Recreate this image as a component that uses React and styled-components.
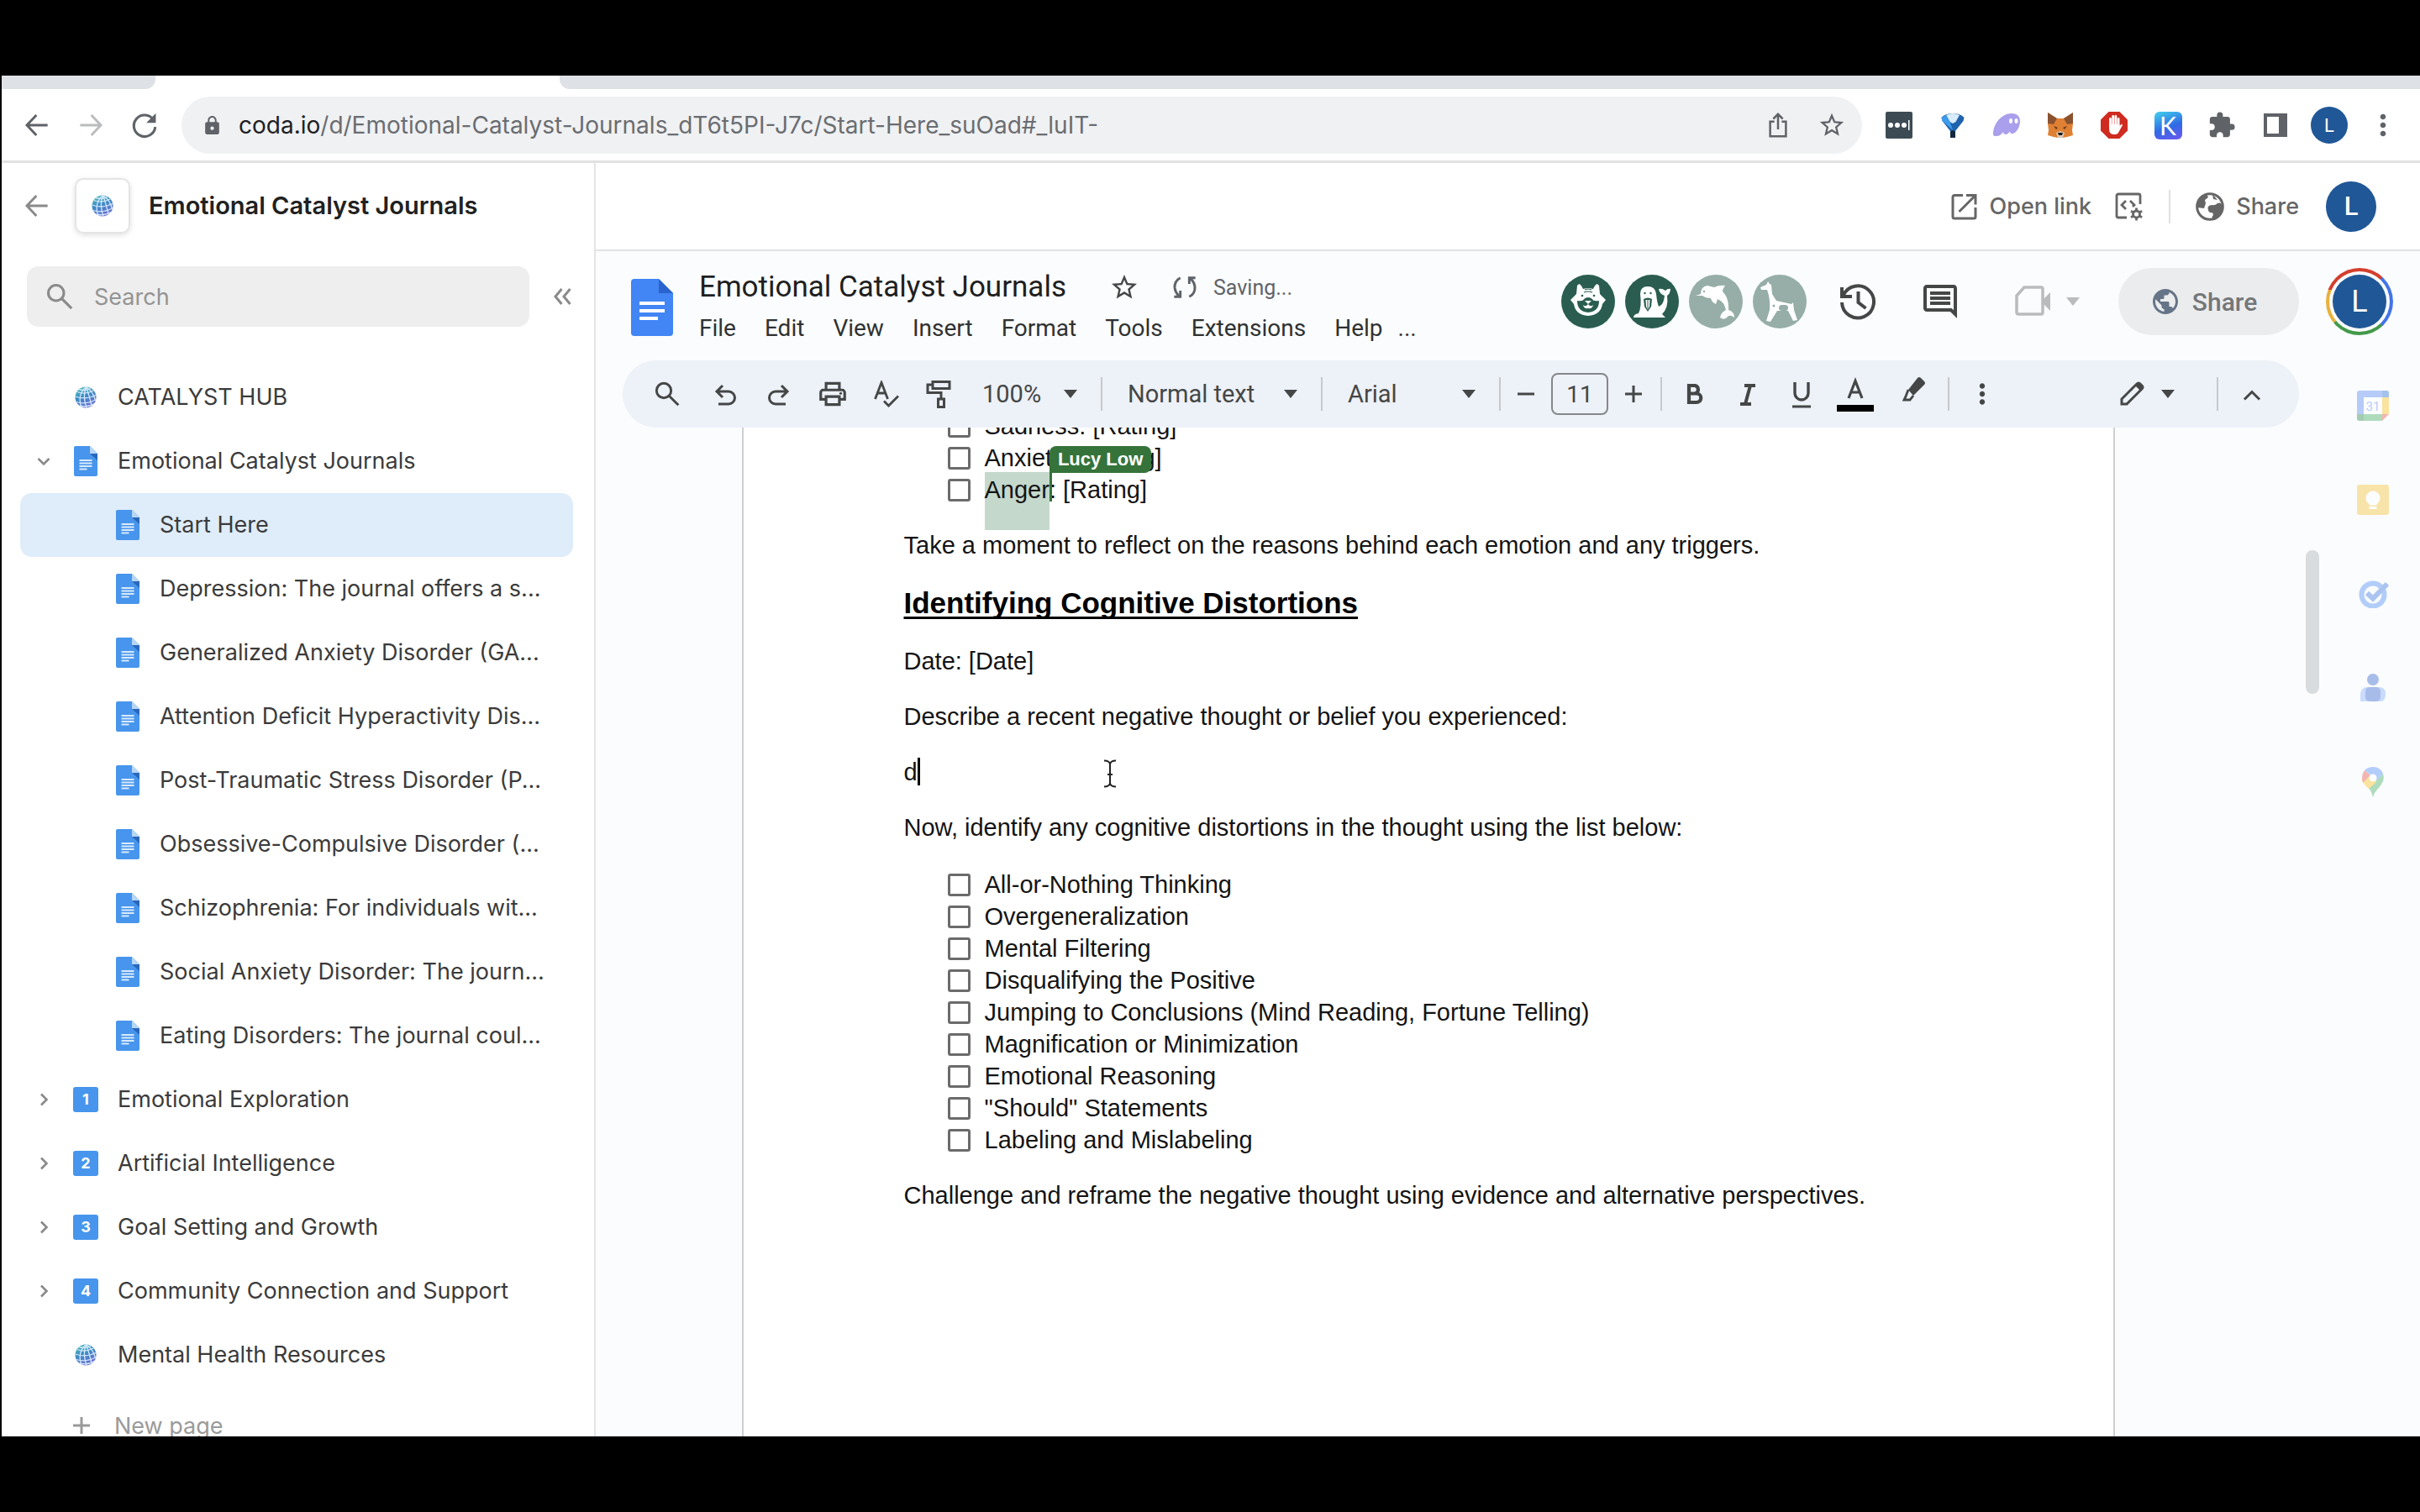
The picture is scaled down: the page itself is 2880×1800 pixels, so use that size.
import React from 'react';
import styled, { createGlobalStyle, css } from 'styled-components';
import { MdExtension, MdLock, MdPublic, MdOutlineComment, MdOutlinePrint, MdMoreVert, MdStarBorder } from 'react-icons/md';

const GlobalStyle = createGlobalStyle`
  * { box-sizing: border-box; }
  body { margin: 0; background: #000; font-family: Inter, "Noto Sans", sans-serif; color: #3b3b3b; }
  h1, h2, p, ul { margin: 0; padding: 0; font-weight: 400; }
  ul { list-style: none; }
  a { color: inherit; text-decoration: none; }
  button { border: 0; padding: 0; background: none; font: inherit; color: inherit; }
  svg { display: block; flex: none; }
`;

/* ---------- shell ---------- */
const Screen = styled.div`
  height: 100vh;
  padding: 90px 0 90px 2px;
  display: flex;
  flex-direction: column;
  background: #000;
`;
const TabStrip = styled.div`
  flex: none;
  height: 16px;
  display: flex;
  justify-content: space-between;
  background: #fff;
`;
const TabEdge = styled.div`
  background: #dee1e5;
  ${p => p.$first
    ? css`width: 183px; border-bottom-right-radius: 12px;`
    : css`flex: 1; margin-left: 481px; border-bottom-left-radius: 12px;`}
`;
const BrowserBar = styled.header`
  flex: none;
  display: flex;
  align-items: center;
  padding: 9px 12px 8px 10px;
  background: #fff;
  border-bottom: 3px solid #e2e2e2;
  color: #5f6368;
`;
const BarButton = styled.button`
  width: 64px;
  height: 48px;
  display: flex;
  align-items: center;
  justify-content: center;
  color: ${p => p.$color || 'inherit'};
`;
const AddressBar = styled.div`
  flex: 1;
  min-width: 0;
  height: 68px;
  margin: 0 12px;
  padding: 0 4px 0 24px;
  border-radius: 34px;
  display: flex;
  align-items: center;
  background: #f0f1f3;
`;
const Url = styled.span`
  flex: 1;
  margin-left: 19px;
  font-size: 28px;
  line-height: 36px;
  white-space: nowrap;
  overflow: hidden;
  color: #6a6d71;
  b { font-weight: 400; color: #202124; }
`;
const Avatar = styled.span`
  width: ${p => p.$size}px;
  height: ${p => p.$size}px;
  border-radius: 50%;
  display: flex;
  align-items: center;
  justify-content: center;
  background: #205796;
  color: #fff;
  font-family: Roboto, sans-serif;
  font-size: ${p => p.$font}px;
`;
const Body = styled.div`
  flex: 1;
  min-height: 0;
  display: flex;
  background: #fff;
`;

/* ---------- sidebar ---------- */
const Sidebar = styled.aside`
  flex: none;
  width: 707px;
  overflow: hidden;
  border-right: 2px solid #e2e4e6;
`;
const SideHead = styled.div`
  display: flex;
  align-items: center;
  padding: 18px 0 0 10px;
`;
const DocTile = styled.span`
  width: 66px;
  height: 66px;
  margin: 0 22px 0 13px;
  border: 2px solid #e4e4e4;
  border-radius: 10px;
  display: flex;
  align-items: center;
  justify-content: center;
  box-shadow: 0 2px 6px rgba(0, 0, 0, 0.12);
`;
const SideTitle = styled.h2`
  font-size: 29px;
  line-height: 36px;
  font-weight: 600;
  color: #212121;
`;
const SearchRow = styled.form`
  display: flex;
  align-items: center;
  padding: 39px 0 46px 30px;
  color: #8a8a8a;
`;
const SearchBox = styled.label`
  flex: 1;
  height: 72px;
  padding-left: 22px;
  border-radius: 14px;
  display: flex;
  align-items: center;
  gap: 24px;
  background: #eee;
`;
const SearchInput = styled.input`
  flex: 1;
  min-width: 0;
  border: 0;
  padding: 0;
  background: none;
  font: 27px Inter, sans-serif;
  &::placeholder { color: #939393; opacity: 1; }
`;
const CollapseButton = styled(BarButton)`width: 77px;`;
const PageRow = styled.li`
  height: 76px;
  margin: 0 25px 0 22px;
  padding-left: ${p => (p.$nested ? 50 : 0)}px;
  border-radius: 14px;
  display: flex;
  align-items: center;
  background: ${p => (p.$active ? '#dfecf9' : 'none')};
`;
const Toggle = styled.button`
  width: 56px;
  height: 56px;
  display: flex;
  align-items: center;
  justify-content: center;
  color: #8a8a8a;
`;
const ToggleSpace = styled.span`width: 56px;`;
const PageLink = styled.a`
  flex: 1;
  min-width: 0;
  display: flex;
  align-items: center;
  gap: 23px;
  padding-left: 7px;
  font-size: 27px;
  line-height: 36px;
  white-space: nowrap;
`;
const IconSlot = styled.span`
  width: 30px;
  display: flex;
  justify-content: center;
`;
const NumberIcon = styled.span`
  width: 30px;
  height: 30px;
  border-radius: 3px;
  background: #4795ec;
  color: #fff;
  font-size: 18px;
  line-height: 30px;
  font-weight: 700;
  text-align: center;
`;
const NewPage = styled.button`
  display: flex;
  align-items: center;
  gap: 28px;
  height: 76px;
  margin: 8px 0 0 84px;
  font-size: 27px;
  color: #9a9a9a;
`;

/* ---------- coda main column ---------- */
const Main = styled.main`
  flex: 1;
  min-width: 0;
  display: flex;
  flex-direction: column;
`;
const LinkBar = styled.div`
  flex: none;
  height: 105px;
  padding-right: 52px;
  border-bottom: 2px solid #e1e3e5;
  display: flex;
  align-items: center;
  justify-content: flex-end;
  font-size: 27px;
  font-weight: 500;
  color: #666;
`;
const LabelButton = styled.button`
  display: flex;
  align-items: center;
  gap: 14px;
`;
const EmbedButton = styled.button`margin: 0 30px 0 28px;`;
const BarRule = styled.span`
  width: 2px;
  height: 40px;
  margin-right: 30px;
  background: #e0e0e0;
`;
const ProfileButton = styled.button`margin-left: 32px;`;

/* ---------- document editor ---------- */
const Editor = styled.section`
  flex: 1;
  min-height: 0;
  display: flex;
  flex-direction: column;
  background: #fafcfe;
  font-family: Roboto, "Noto Sans", sans-serif;
  color: #444746;
`;
const EditorHead = styled.div`
  flex: none;
  display: flex;
  align-items: center;
  padding: 18px 32px 14px 42px;
`;
const TitleBlock = styled.div`
  flex: 1;
  margin-left: 31px;
`;
const TitleRow = styled.div`
  display: flex;
  align-items: center;
  gap: 32px;
  height: 50px;
`;
const DocTitle = styled.h1`
  margin-right: 17px;
  font-size: 35px;
  line-height: 48px;
  color: #1f1f1f;
`;
const Status = styled.span`
  display: flex;
  align-items: center;
  gap: 14px;
  font-size: 25px;
  color: #5f6368;
`;
const SmallButton = styled.button`
  width: 40px;
  display: flex;
  justify-content: center;
`;
const MenuBar = styled.nav`
  display: flex;
  gap: 34px;
  font-size: 28px;
  line-height: 48px;
  color: #303232;
`;
const MenuMore = styled.button`margin-left: -16px;`;
const HeadTools = styled.div`
  display: flex;
  align-items: center;
  padding-bottom: 14px;
`;
const Collaborators = styled.div`
  display: flex;
  gap: 12px;
  margin-right: 12px;
`;
const HeadButton = styled.button`
  width: 98px;
  height: 64px;
  display: flex;
  align-items: center;
  justify-content: center;
`;
const MeetButton = styled.button`
  display: flex;
  align-items: center;
  gap: 19px;
  padding: 0 46px 0 40px;
  color: #b9bbbc;
`;
const SharePill = styled.button`
  width: 215px;
  height: 80px;
  padding-right: 12px;
  border-radius: 40px;
  display: flex;
  align-items: center;
  justify-content: center;
  gap: 14px;
  background: #ebecee;
  font-size: 30px;
  font-weight: 500;
  color: #747678;
`;
const AccountRing = styled.button`
  width: 80px;
  height: 80px;
  margin-left: 32px;
  padding: 4px;
  border-radius: 50%;
  background: conic-gradient(#d33f2c 0 12%, #4374e8 12% 38%, #439a4b 38% 64%, #e9b13c 64% 81%, #d33f2c 81%);
`;
const RingGap = styled.span`
  display: block;
  padding: 4px;
  border-radius: 50%;
  background: #fafcfe;
`;
const EditorBody = styled.div`
  flex: 1;
  min-height: 0;
  display: flex;
`;
const EditorColumn = styled.div`
  flex: 1;
  min-width: 0;
  display: flex;
  flex-direction: column;
`;
const Toolbar = styled.div`
  flex: none;
  height: 80px;
  margin-left: 32px;
  padding: 0 28px 0 16px;
  border-radius: 40px;
  display: flex;
  align-items: center;
  background: #edf1f8;
  font-size: 29px;
`;
const ToolButton = styled.button`
  width: ${p => p.$width || 64}px;
  height: 56px;
  display: flex;
  align-items: center;
  justify-content: center;
`;
const ToolGroup = styled.div`
  display: flex;
  margin-left: -6px;
`;
const ToolRule = styled.span`
  width: 2px;
  height: 40px;
  margin: 0 12px 0 14px;
  background: #c7c9cc;
`;
const SelectWrap = styled.span`
  width: ${p => p.$width}px;
  display: grid;
  align-items: center;
  > * { grid-area: 1 / 1; }
  > svg { justify-self: end; margin-right: 14px; pointer-events: none; }
`;
const Select = styled.select`
  appearance: none;
  height: 56px;
  padding: 0 0 0 18px;
  border: 0;
  background: none;
  font: inherit;
  color: inherit;
`;
const SizeInput = styled.input`
  width: 68px;
  height: 50px;
  margin: 0 12px;
  padding: 0;
  border: 2px solid #85888a;
  border-radius: 8px;
  background: none;
  font: inherit;
  font-size: 28px;
  color: inherit;
  text-align: center;
`;
const ToolSpacer = styled.span`flex: 1;`;
const ModeButton = styled.button`
  display: flex;
  align-items: center;
  gap: 19px;
  padding-right: 36px;
`;
const Canvas = styled.div`
  flex: 1;
  min-height: 0;
  overflow: hidden;
  display: flex;
  justify-content: center;
  padding-right: 46px;
`;
const Paper = styled.article`
  flex: 0 1 1634px;
  margin-top: -21px;
  padding: 0 191px;
  border: 2px solid #cdcfd0;
  border-width: 0 2px;
  min-height: 2112px;
  background: #fff;
  font: 29px/38px "Liberation Sans", Arial, sans-serif;
  color: #141414;
`;
const Paragraph = styled.p`
  margin-top: 28px;
  position: relative;
`;
const Heading = styled.h2`
  margin-top: 28px;
  font-size: 35px;
  line-height: 44px;
  font-weight: 700;
  text-decoration: underline;
  text-decoration-thickness: 3px;
  text-underline-offset: 4px;
  text-decoration-skip-ink: none;
  color: #000;
`;
const Checklist = styled.ul`
  padding-left: 52px;
  margin-top: ${p => p.$top || 0}px;
`;
const CheckItem = styled.label`
  display: flex;
  align-items: center;
  gap: 17px;
`;
const CheckBox = styled.input`
  appearance: none;
  width: 27px;
  height: 27px;
  margin: 0;
  border: 3px solid #6b6b6b;
  border-radius: 3px;
`;
const Selected = styled.span`
  position: relative;
  isolation: isolate;
  &::before {
    content: '';
    position: absolute;
    z-index: -1;
    inset: -5px 0 -32px;
    background: #c5d8cc;
  }
`;
const PeerCaret = styled.span`
  position: absolute;
  left: 100%;
  top: -4px;
  width: 3px;
  height: 34px;
  background: #35733a;
`;
const PeerTag = styled.span`
  position: absolute;
  left: 100%;
  bottom: 100%;
  margin-bottom: 4px;
  padding: 0 10px;
  border-radius: 8px 8px 8px 0;
  background: #35733a;
  color: #fff;
  font-size: 22px;
  line-height: 32px;
  font-weight: 700;
  white-space: nowrap;
`;
const TextCaret = styled.span`
  display: inline-block;
  width: 3px;
  height: 33px;
  vertical-align: -6px;
  background: #000;
`;
const Pointer = styled.span`
  position: absolute;
  left: 236px;
  top: 4px;
`;
const ScrollThumb = styled.div`
  flex: none;
  width: 16px;
  height: 171px;
  margin: 226px 0 0 8px;
  border-radius: 8px;
  background: #d8dcdf;
`;
const Rail = styled.nav`
  flex: none;
  width: 120px;
  padding: 30px 0 0 8px;
  display: flex;
  flex-direction: column;
  align-items: center;
  gap: 64px;
`;
const RailButton = styled.button`
  height: 48px;
  display: flex;
  align-items: center;
  opacity: 0.38;
`;

/* ---------- drawings ---------- */
const Line = ({ size = 32, box = 24, w = 2, children, ...rest }) => (
  <svg width={size} height={size} viewBox={`0 0 ${box} ${box}`} fill="none" stroke="currentColor" strokeWidth={w} aria-hidden="true" {...rest}>
    {children}
  </svg>
);
const ArrowLeft = ({ w = 2.2 }) => <Line size={32} w={w}><path d="M21.5 12H3.5M11.5 3L3 12l8.500 9" /></Line>;
const ArrowRight = () => <Line size={32} w={2.2}><path d="M2.500 12h18M12.500 3L21 12l-8.500 9" /></Line>;
const Reload = () => (
  <Line size={34} w={2.2}><path d="M19.500 7.500A9 9 0 1 0 21 13.500" /><path d="M21.500 2v8h-8z" fill="currentColor" stroke="none" /></Line>
);
const Caret = () => <svg width="16" height="10" viewBox="0 0 16 10" aria-hidden="true"><path d="M0 0h16L8 10z" fill="currentColor" /></svg>;
const Magnifier = ({ size = 34, w = 2.200 }) => <Line size={size} w={w}><circle cx="9" cy="9" r="6.500" /><path d="M13.500 13.500L22 22" /></Line>;
const Chevrons = () => <Line size={24} w={3}><path d="M11.500 3L4 12l7.500 9M21.500 3L14 12l7.500 9" /></Line>;
const Chevron = ({ open }) => (
  <Line size={16} box={16} w={2.600}><path d={open ? 'M1.500 5L8 11.500 14.500 5' : 'M5 1.500L11.500 8 5 14.500'} /></Line>
);
const Globe = () => (
  <svg width="26" height="26" viewBox="0 0 26 26" aria-hidden="true">
    <defs>
      <linearGradient id="globe" x1="0" y1="0" x2="0.500" y2="1">
        <stop offset="0" stopColor="#5cc8b8" /><stop offset="0.500" stopColor="#3b8cc4" /><stop offset="1" stopColor="#6a6fd0" />
      </linearGradient>
    </defs>
    <circle cx="13" cy="13" r="12.500" fill="url(#globe)" />
    <g fill="none" stroke="#d5e8fb" strokeWidth="1.300">
      <path d="M3 6.500Q12 10.500 22 5M.800 12Q12 16.500 25 10.500M2 18.500Q13 22 24.500 16M5 3.500Q14 6 19 2.500M6 23Q15 25.500 23 20.500" />
      <path d="M13.500.500Q3 9 7.500 24.500M13.500.500Q9 12 14 25.500M13.500.500Q17 10 20 23M13.500.500Q22 6 24.500 17" />
    </g>
  </svg>
);
const PageIcon = () => (
  <svg width="28" height="36" viewBox="0 0 28 36" aria-hidden="true">
    <path d="M2 0h17l9 9v25a2 2 0 0 1-2 2H2a2 2 0 0 1-2-2V2a2 2 0 0 1 2-2z" fill="#4795ec" />
    <path d="M19 0l9 9h-9z" fill="#b5d6f8" /><path d="M19 9h9v8z" fill="#2a67bb" />
    <path d="M6.500 17h15M6.500 20.500h15M6.500 24h15M6.500 27.500h9" stroke="#d8eafc" strokeWidth="2" />
  </svg>
);
const DocsLogo = () => (
  <svg width="50" height="68" viewBox="0 0 50 68" aria-hidden="true">
    <path d="M4 0h29l17 17v47a4 4 0 0 1-4 4H4a4 4 0 0 1-4-4V4a4 4 0 0 1 4-4z" fill="#4285f4" />
    <path d="M33 0l17 17H33z" fill="#2a63cd" />
    <path d="M10 29h30M10 38h30M10 47h22" stroke="#fff" strokeWidth="4" />
  </svg>
);
const UploadIcon = () => (
  <Line size={30}><path d="M8.500 8.500H4.500v14h15v-14h-4M12 16V2M7.500 6L12 1.500 16.500 6" /></Line>
);
const PanelIcon = () => (
  <svg width="28" height="28" viewBox="0 0 28 28" aria-hidden="true"><path fillRule="evenodd" d="M0 0h28v28H0zM4 4v20h14V4z" fill="currentColor" /></svg>
);
const DotsTile = () => (
  <svg width="32" height="32" viewBox="0 0 32 32" aria-hidden="true">
    <rect width="32" height="32" rx="2" fill="#3d4b54" />
    <g fill="#fff"><circle cx="6" cy="16" r="3" /><circle cx="14" cy="16" r="3" /><circle cx="22" cy="16" r="3" /><path d="M27 10h1.500v12H27z" /></g>
  </svg>
);
const FunnelIcon = () => (
  <svg width="30" height="32" viewBox="0 0 30 32" aria-hidden="true">
    <path d="M1.500 7Q6 2 15 2t13.500 5l-1 4-9.500 12v8h-6v-8L2.500 11z" fill="#1f62ae" />
    <path d="M7 4Q15 0 23 4l-4.500 8-3.500 2-3.500-2z" fill="#d8ecfb" /><path d="M1.500 7L7 4l5 9 3 9L2.500 11z" fill="#3d9bea" /><path d="M12 23.500l3-1.500 3 1.500V31h-6z" fill="#12283f" />
  </svg>
);
const GhostIcon = () => (
  <svg width="34" height="30" viewBox="0 0 34 30" aria-hidden="true">
    <path d="M1 26C1 12 12 1 23 1c7 0 10 4 10 9 0 8-5 15-9 15-3 0-3-2-3-3-1 2-3 4-5 4s-3-1-3-3c-2 3-5 5-8 5-2 0-4 0-4-2z" fill="#a99fec" />
    <ellipse cx="22" cy="10" rx="2" ry="3" fill="#fff" /><ellipse cx="28.500" cy="10" rx="2" ry="3" fill="#fff" />
  </svg>
);
const FoxIcon = () => (
  <svg width="32" height="32" viewBox="0 0 32 32" aria-hidden="true">
    <path d="M1 1l11 7h8l11-7v13l-1 8 1 6-7 2-5 1h-6l-5-1-7-2 1-6-1-8z" fill="#e08032" />
    <path d="M1 1l11 7-4 7-7-1zM31 1l-11 7 4 7 7-1z" fill="#8a5230" />
    <path d="M8 17l5 2-2 2zM24 17l-5 2 2 2z" fill="#5b3a24" /><path d="M11 25l5-2 5 2-2 6h-6z" fill="#d8c7b5" /><path d="M13 25h6l-1 3h-4z" fill="#1d1a18" />
  </svg>
);
const StopIcon = () => (
  <svg width="32" height="32" viewBox="0 0 32 32" aria-hidden="true">
    <path d="M9.500 0h13L32 9.500v13L22.500 32h-13L0 22.500v-13z" fill="#cf2b20" />
    <g stroke="#fff" strokeWidth="2.800" strokeLinecap="round"><path d="M11.500 18V8.500M14.700 16V5.500M17.900 16V5.500M21.100 17V8.500" /></g>
    <path d="M10.100 15h12.400v2l2.500-2.500 1 1.500-5 9q-1 2-5 2-5.900 0-5.900-6z" fill="#fff" />
  </svg>
);
const KTile = styled.span`
  width: 33px;
  height: 33px;
  border-radius: 6px;
  background: linear-gradient(160deg, #3fc0ea 10%, #2f6be6 55%, #6f58ee);
  color: #fff;
  font: 30px/33px Lato, sans-serif;
  text-align: center;
`;
const OpenLinkIcon = () => (
  <Line size={32} box={32} w={3}><path d="M14 2.500H4a2 2 0 0 0-2 2V28a2 2 0 0 0 2 2h23a2 2 0 0 0 2-2V17M18 2.500h11v11M29 2.500L9.500 22" /></Line>
);
const EmbedIcon = () => (
  <Line size={34} box={34} w={2.800}>
    <path d="M30 14V4a2 2 0 0 0-2-2H4a2 2 0 0 0-2 2v24a2 2 0 0 0 2 2h10M13 10l-5 5 5 5M18 10l5 5-2 2" />
    <circle cx="25.500" cy="26" r="4" /><path d="M25.500 18.500v3M25.500 30.500v3M19 22.200l2.600 1.500M29.500 28.300l2.600 1.500M19 29.800l2.600-1.500M29.500 23.700l2.600-1.500" />
  </Line>
);
const EarthIcon = () => (
  <svg width="34" height="34" viewBox="0 0 34 34" aria-hidden="true">
    <circle cx="17" cy="17" r="15.300" fill="none" stroke="currentColor" strokeWidth="3" />
    <path d="M13 2C5 4 1 10 2 18l8 1 2-6-1-4 4-3zM15 21q-2-5 4-6 4 1 7-2 4-2 6 3 0 9-6 13l-5 3q-3-2 0-5l-1-3q-4 1-5-3zM20 2l1 6 5 1z" fill="currentColor" />
  </svg>
);
const SyncIcon = () => (
  <Line size={32} w={2.200}><path d="M8 3.500q-5.500 3-5 9 .500 4 3.500 7M2.500 20.500H8V15M16 20.500q5.500-3 5-9-.500-4-3.500-7M21.500 3.500H16V9" /></Line>
);
const HistoryIcon = () => (
  <Line size={44} box={44} w={4}>
    <path d="M4.500 15A19 19 0 1 1 3 23" /><path d="M3 5v11h12" strokeWidth="4" /><path d="M22.500 10v13l9 7" />
  </Line>
);
const VideoIcon = () => (
  <Line size={42} box={42} w={3.500}>
    <path d="M11 4h20a2 2 0 0 1 2 2v28a2 2 0 0 1-2 2H4a2 2 0 0 1-2-2V14z" /><path d="M33 19l9-9v22l-9-9z" fill="currentColor" stroke="none" />
  </Line>
);
const UndoIcon = ({ flip }) => (
  <Line size={28} box={28} w={3} transform={flip ? 'scale(-1 1)' : undefined}>
    <path d="M11 4L4 11l7 7M4 11h14a6.500 6.500 0 0 1 0 15H6" />
  </Line>
);
const SpellIcon = () => (
  <Line size={32} box={32} w={2.800}><path d="M2.500 22L10 2.500 17.500 22M5.500 15h9M13 24.500l5.500 5.500L30 18.500" /></Line>
);
const RollerIcon = () => (
  <Line size={34} box={34} w={3}><path d="M8 2.500h20v8H8zM8 6H2v9.500h16V23M14.500 23h7v9.500h-7z" /></Line>
);
const BarGlyph = ({ plus }) => <Line size={22} box={22} w={3}><path d={plus ? 'M1 11h20M11 1v20' : 'M1 11h20'} /></Line>;
const BoldIcon = () => <Line size={28} box={28} w={4.200}><path d="M8 4h7.500a5 5 0 0 1 0 9.500H8zM8 13.500h9a5.200 5.200 0 0 1 0 10.500H8z" /></Line>;
const ItalicIcon = () => <Line size={28} box={28} w={4}><path d="M10 4h13M5 26h13M17 4l-6 22" /></Line>;
const UnderlineIcon = () => <Line size={34} box={34} w={3.400}><path d="M9 3v13a8 8 0 0 0 16 0V3" /><path d="M6 32h22" strokeWidth="3" /></Line>;
const ColorIcon = () => (
  <svg width="44" height="42" viewBox="0 0 44 42" fill="none" aria-hidden="true">
    <path d="M14 26L22 5.500 30 26M16.500 19h11" stroke="currentColor" strokeWidth="3.200" /><path d="M0 34h44v8H0z" fill="#000" />
  </svg>
);
const HighlightIcon = () => (
  <svg width="32" height="32" viewBox="0 0 32 32" aria-hidden="true" transform="translate(7 -6)">
    <path d="M8 17l11-14q2-2 4 0l4 4q2 2 0 4L14 24z" fill="currentColor" />
    <path d="M8 17l-3 8-2 4h7l4-5" fill="none" stroke="currentColor" strokeWidth="2.800" />
  </svg>
);
const PencilIcon = () => (
  <Line size={32} box={32} w={3}><path d="M4 28v-6L22 4q2-2 4 0l2 2q2 2 0 4L10 28z" /><path d="M20 6l6 6 3-4-5-5z" fill="currentColor" stroke="none" /></Line>
);
const UpIcon = () => <Line size={22} box={22} w={3}><path d="M2 17.500l9-9 9 9" /></Line>;
const IBeam = () => (
  <svg width="18" height="34" viewBox="0 0 18 34" fill="none" stroke="#222" strokeWidth="2" aria-hidden="true">
    <path d="M2 1.500q6 0 7 4 1-4 7-4M2 32.500q6 0 7-4 1 4 7 4M9 5v24M6 18h6" />
  </svg>
);

const Animal = ({ color, label, children }) => (
  <svg width="64" height="64" viewBox="0 0 64 64" role="img" aria-label={label}>
    <circle cx="32" cy="32" r="32" fill={color} />{children}
  </svg>
);
const DEEP = '#2a5d50';
const SOFT = '#96aea7';
const animals = [
  <Animal key="a" color={DEEP} label="Anonymous quokka">
    <path d="M19 13q3-5 7 4 6-2 12 0 4-9 7-4l1 10 7 7-4 5q-2 13-17 14-15-1-17-14l-4-5 7-7z" fill="#fff" />
    <path d="M19 31q7 1 8-2 5-4 10 0 1 3 8 2 0 13-13 14-13-1-13-14z" fill={DEEP} />
    <path d="M28 31h8l-4 4zM26 36q3 3 6-1 3 4 6 1-1 5-6 4-5 1-6-4z" fill="#fff" />
    <g stroke={DEEP} strokeWidth="1.200" fill="none"><path d="M28 18q4-2 8 0M27 21q5-2 10 0" /></g>
    <circle cx="25" cy="25" r="1.300" fill={DEEP} /><circle cx="39" cy="25" r="1.300" fill={DEEP} />
  </Animal>,
  <Animal key="b" color={DEEP} label="Anonymous walrus">
    <path d="M18 23q0-9 9-9t10 9q1 10 3 15 6-2 7-13-6-2-7-8 4-1 8 2 3-3 6-2 0 5-4 8 2 14-6 22l4 4H10q0-4 6-5 4-8 2-23z" fill="#fff" />
    <path d="M22 29q5-3 10 0l-1 9-4 6-4-6z" fill={DEEP} /><path d="M24.500 30h5l-.500 8-2 4-2-4z" fill="#fff" /><path d="M27 30v11" stroke={DEEP} />
    <circle cx="23.500" cy="22" r="1.200" fill={DEEP} /><circle cx="30.500" cy="22" r="1.200" fill={DEEP} />
  </Animal>,
  <Animal key="c" color={SOFT} label="Anonymous dolphin">
    <path d="M8 25l6-2q0-9 8-10l8 2q6-3 13-2-3 4-3 7 8 8 7 22 7 2 7 9-5-4-8-1-4 5-9 1 1-6 7-9-2-10-10-13l-2 6q-5-2-6-7-6 0-10-3z" fill="#fff" />
    <circle cx="18" cy="20" r="1.200" fill={SOFT} />
  </Animal>,
  <Animal key="d" color={SOFT} label="Anonymous giraffe">
    <path d="M9 15l7-3 2-4 2 3 2 1 1 11 5 8 18 4 2-2 1 9 4 12-5 1-6-12H29l-8 13-5-1 4-13q1-13-3-24l-7 0z" fill="#fff" />
    <rect x="31" y="36" width="11" height="7" rx="3.500" fill={SOFT} /><circle cx="25" cy="37" r="1.500" fill={SOFT} />
  </Animal>,
];

const CalendarIcon = () => (
  <svg width="38" height="38" viewBox="0 0 38 38" role="img" aria-label="Calendar">
    <rect x="0" y="1" width="38" height="36" rx="3" fill="#fff" />
    <path d="M3 1h32a3 3 0 0 1 3 3v5H8v20H0V4a3 3 0 0 1 3-3z" fill="#4a7df0" /><path d="M30 9h8v20h-8z" fill="#fbbc04" />
    <path d="M8 29h22v8H8z" fill="#34a853" /><path d="M0 29h8v8H3a3 3 0 0 1-3-3z" fill="#188038" /><path d="M30 29h8l-8 8z" fill="#ea4335" /><path d="M30 1h5a3 3 0 0 1 3 3v5h-8z" fill="#1967d2" />
    <text x="19" y="24.500" textAnchor="middle" fontFamily="Roboto, sans-serif" fontSize="15" fill="#4a7df0">31</text>
  </svg>
);
const KeepIcon = () => (
  <svg width="38" height="38" viewBox="0 0 38 38" aria-hidden="true">
    <rect y="1" width="38" height="36" rx="3" fill="#f6bc20" /><circle cx="19" cy="17" r="8.500" fill="#fff" /><path d="M14.500 24h9M14.500 28.500h9" stroke="#fff" strokeWidth="3" />
  </svg>
);
const TasksIcon = () => (
  <svg width="38" height="34" viewBox="0 0 38 34" fill="none" aria-hidden="true">
    <circle cx="19" cy="18" r="13.500" stroke="#3f82f4" strokeWidth="6" /><path d="M12 16l7 6.500L36 5" stroke="#2d6bdb" strokeWidth="6" />
  </svg>
);
const ContactsIcon = () => (
  <svg width="30" height="34" viewBox="0 0 30 34" aria-hidden="true">
    <circle cx="15" cy="7" r="7" fill="#2257c8" /><path d="M0 33V26q0-10 8-10h14q8 0 8 8 0 9-6 9z" fill="#7fa6fb" /><rect x="6" y="16" width="18" height="17" rx="5" fill="#2257c8" />
  </svg>
);
const MapsIcon = () => (
  <svg width="26" height="36" viewBox="0 0 26 36" aria-hidden="true">
    <path d="M13 36q-1-6-5-11l17-17q2 6-1 11-2 4-6 8-4 4-5 9z" fill="#34a853" />
    <path d="M1 18q-1-2-1-5l9-3 8 8-9 8q-5-4-7-8z" fill="#fbbc04" /><path d="M0 13q0-5 3-9l7 6-9 9q-1-3-1-6z" fill="#ea4335" />
    <path d="M3 4q4-4 10-4 9 0 12 8l-7 8L8 8z" fill="#4285f4" /><circle cx="13" cy="13" r="4.500" fill="#fff" />
  </svg>
);

/* ---------- data ---------- */
const pages = [
  { icon: 'globe', text: 'CATALYST HUB' },
  { icon: 'page', text: 'Emotional Catalyst Journals', toggle: 'open' },
  { icon: 'page', text: 'Start Here', nested: true, active: true },
  { icon: 'page', text: 'Depression: The journal offers a s...', nested: true },
  { icon: 'page', text: 'Generalized Anxiety Disorder (GA...', nested: true },
  { icon: 'page', text: 'Attention Deficit Hyperactivity Dis...', nested: true },
  { icon: 'page', text: 'Post-Traumatic Stress Disorder (P...', nested: true },
  { icon: 'page', text: 'Obsessive-Compulsive Disorder (...', nested: true },
  { icon: 'page', text: 'Schizophrenia: For individuals wit...', nested: true },
  { icon: 'page', text: 'Social Anxiety Disorder: The journ...', nested: true },
  { icon: 'page', text: 'Eating Disorders: The journal coul...', nested: true },
  { icon: 1, text: 'Emotional Exploration', toggle: 'closed' },
  { icon: 2, text: 'Artificial Intelligence', toggle: 'closed' },
  { icon: 3, text: 'Goal Setting and Growth', toggle: 'closed' },
  { icon: 4, text: 'Community Connection and Support', toggle: 'closed' },
  { icon: 'globe', text: 'Mental Health Resources' },
];
const extensions = [
  ['Passwords', <DotsTile />], ['Filter', <FunnelIcon />], ['Phantom', <GhostIcon />], ['Fox wallet', <FoxIcon />],
  ['Ad blocker', <StopIcon />], ['K wallet', <KTile>K</KTile>], ['Extensions', <MdExtension size={34} />], ['Side panel', <PanelIcon />],
  ['Profile', <Avatar $size={44} $font={22}>L</Avatar>], ['Browser menu', <MdMoreVert size={40} />],
];
const menus = ['File', 'Edit', 'View', 'Insert', 'Format', 'Tools', 'Extensions', 'Help'];
const distortions = [
  'All-or-Nothing Thinking', 'Overgeneralization', 'Mental Filtering', 'Disqualifying the Positive',
  'Jumping to Conclusions (Mind Reading, Fortune Telling)', 'Magnification or Minimization',
  'Emotional Reasoning', '"Should" Statements', 'Labeling and Mislabeling',
];
const apps = [['Calendar', <CalendarIcon />], ['Keep', <KeepIcon />], ['Tasks', <TasksIcon />], ['Contacts', <ContactsIcon />], ['Maps', <MapsIcon />]];

const RowIcon = ({ kind }) => (
  kind === 'globe' ? <Globe /> : kind === 'page' ? <PageIcon /> : <NumberIcon>{kind}</NumberIcon>
);
const Dropdown = ({ label, value, width }) => (
  <SelectWrap $width={width}>
    <Select aria-label={label} defaultValue={value}><option>{value}</option></Select>
    <Caret />
  </SelectWrap>
);
const Check = ({ children }) => <li><CheckItem><CheckBox type="checkbox" /><span>{children}</span></CheckItem></li>;

function Browser() {
  return (
    <>
      <TabStrip><TabEdge $first /><TabEdge /></TabStrip>
      <BrowserBar>
        <BarButton aria-label="Back"><ArrowLeft /></BarButton>
        <BarButton aria-label="Forward" $color="#babcbe"><ArrowRight /></BarButton>
        <BarButton aria-label="Reload"><Reload /></BarButton>
        <AddressBar>
          <MdLock size={25} />
          <Url><b>coda.io</b>/d/Emotional-Catalyst-Journals_dT6t5PI-J7c/Start-Here_suOad#_luIT-</Url>
          <BarButton aria-label="Share this page"><UploadIcon /></BarButton>
          <BarButton aria-label="Bookmark"><MdStarBorder size={34} /></BarButton>
        </AddressBar>
        {extensions.map(([name, icon]) => <BarButton key={name} aria-label={name}>{icon}</BarButton>)}
      </BrowserBar>
    </>
  );
}

function PageList() {
  return (
    <Sidebar>
      <SideHead>
        <BarButton aria-label="All docs" $color="#8a8a8a"><ArrowLeft /></BarButton>
        <DocTile><Globe /></DocTile>
        <SideTitle>Emotional Catalyst Journals</SideTitle>
      </SideHead>
      <SearchRow>
        <SearchBox><Magnifier /><SearchInput aria-label="Search" placeholder="Search" /></SearchBox>
        <CollapseButton type="button" aria-label="Collapse sidebar"><Chevrons /></CollapseButton>
      </SearchRow>
      <nav>
        <ul>
          {pages.map(p => (
            <PageRow key={p.text} $nested={p.nested} $active={p.active}>
              {p.toggle ? <Toggle aria-label={'Toggle ' + p.text}><Chevron open={p.toggle === 'open'} /></Toggle> : <ToggleSpace />}
              <PageLink href="#"><IconSlot><RowIcon kind={p.icon} /></IconSlot>{p.text}</PageLink>
            </PageRow>
          ))}
        </ul>
      </nav>
      <NewPage><BarGlyph plus />New page</NewPage>
    </Sidebar>
  );
}

function EditorToolbar() {
  return (
    <Toolbar>
      <ToolButton $width={74} aria-label="Search menus"><Magnifier size={32} /></ToolButton>
      <ToolButton aria-label="Undo"><UndoIcon /></ToolButton>
      <ToolButton aria-label="Redo"><UndoIcon flip /></ToolButton>
      <ToolButton aria-label="Print"><MdOutlinePrint size={38} /></ToolButton>
      <ToolButton aria-label="Spelling"><SpellIcon /></ToolButton>
      <ToolButton aria-label="Paint format"><RollerIcon /></ToolButton>
      <Dropdown label="Zoom" value="100%" width={145} />
      <ToolRule />
      <Dropdown label="Style" value="Normal text" width={234} />
      <ToolRule />
      <Dropdown label="Font" value="Arial" width={184} />
      <ToolRule />
      <ToolButton $width={36} aria-label="Decrease font size"><BarGlyph /></ToolButton>
      <SizeInput aria-label="Font size" defaultValue="11" />
      <ToolButton $width={36} aria-label="Increase font size"><BarGlyph plus /></ToolButton>
      <ToolRule />
      <ToolGroup>
        <ToolButton aria-label="Bold"><BoldIcon /></ToolButton>
        <ToolButton aria-label="Italic"><ItalicIcon /></ToolButton>
        <ToolButton aria-label="Underline"><UnderlineIcon /></ToolButton>
        <ToolButton aria-label="Text color"><ColorIcon /></ToolButton>
        <ToolButton aria-label="Highlight"><HighlightIcon /></ToolButton>
      </ToolGroup>
      <ToolRule />
      <ToolButton $width={54} aria-label="More"><MdMoreVert size={38} /></ToolButton>
      <ToolSpacer />
      <ModeButton aria-label="Editing mode"><PencilIcon /><Caret /></ModeButton>
      <ToolRule />
      <ToolButton $width={56} aria-label="Hide menus"><UpIcon /></ToolButton>
    </Toolbar>
  );
}

function Document() {
  return (
    <Canvas>
      <Paper>
        <Checklist>
          <Check>Sadness: [Rating]</Check>
          <Check>Anxiety: [Rating]</Check>
          <Check><Selected>Anger<PeerCaret /><PeerTag>Lucy Low</PeerTag></Selected>: [Rating]</Check>
        </Checklist>
        <Paragraph>Take a moment to reflect on the reasons behind each emotion and any triggers.</Paragraph>
        <Heading>Identifying Cognitive Distortions</Heading>
        <Paragraph>Date: [Date]</Paragraph>
        <Paragraph>Describe a recent negative thought or belief you experienced:</Paragraph>
        <Paragraph>d<TextCaret /><Pointer><IBeam /></Pointer></Paragraph>
        <Paragraph>Now, identify any cognitive distortions in the thought using the list below:</Paragraph>
        <Checklist $top={30}>{distortions.map(d => <Check key={d}>{d}</Check>)}</Checklist>
        <Paragraph>Challenge and reframe the negative thought using evidence and alternative perspectives.</Paragraph>
      </Paper>
    </Canvas>
  );
}

export default function App() {
  return (
    <Screen>
      <GlobalStyle />
      <Browser />
      <Body>
        <PageList />
        <Main>
          <LinkBar>
            <LabelButton><OpenLinkIcon />Open link</LabelButton>
            <EmbedButton aria-label="Embed settings"><EmbedIcon /></EmbedButton>
            <BarRule />
            <LabelButton><EarthIcon />Share</LabelButton>
            <ProfileButton aria-label="Profile"><Avatar $size={60} $font={31}>L</Avatar></ProfileButton>
          </LinkBar>
          <Editor>
            <EditorHead>
              <DocsLogo />
              <TitleBlock>
                <TitleRow>
                  <DocTitle>Emotional Catalyst Journals</DocTitle>
                  <SmallButton aria-label="Star"><MdStarBorder size={36} /></SmallButton>
                  <Status><SmallButton as="span"><SyncIcon /></SmallButton>Saving...</Status>
                </TitleRow>
                <MenuBar>
                  {menus.map(m => <button key={m}>{m}</button>)}
                  <MenuMore aria-label="More menus">...</MenuMore>
                </MenuBar>
              </TitleBlock>
              <HeadTools>
                <Collaborators>{animals}</Collaborators>
                <HeadButton aria-label="Version history"><HistoryIcon /></HeadButton>
                <HeadButton aria-label="Comments"><MdOutlineComment size={48} /></HeadButton>
                <MeetButton aria-label="Meet"><VideoIcon /><Caret /></MeetButton>
                <SharePill><MdPublic size={36} color="#667487" />Share</SharePill>
                <AccountRing aria-label="Account"><RingGap><Avatar $size={64} $font={36}>L</Avatar></RingGap></AccountRing>
              </HeadTools>
            </EditorHead>
            <EditorBody>
              <EditorColumn>
                <EditorToolbar />
                <Document />
              </EditorColumn>
              <ScrollThumb />
              <Rail>{apps.map(([name, icon]) => <RailButton key={name} aria-label={name}>{icon}</RailButton>)}</Rail>
            </EditorBody>
          </Editor>
        </Main>
      </Body>
    </Screen>
  );
}
